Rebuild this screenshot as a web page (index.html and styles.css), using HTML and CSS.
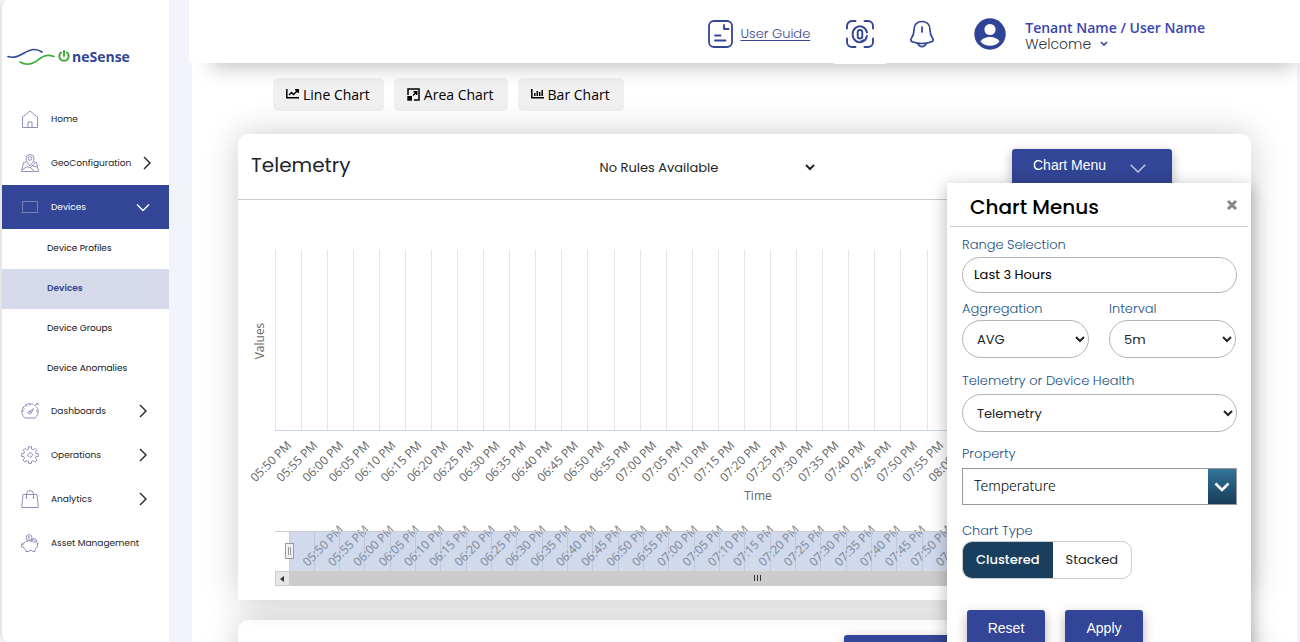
FILE: index.html
```html
<!DOCTYPE html>
<html lang="en">
<head>
<meta charset="utf-8">
<title>OneSense</title>
<link rel="stylesheet" href="styles.css">
</head>
<body>
<div class="app">
  <aside class="sidebar">
    <a class="logo" href="#">
      <svg class="logo-waves" width="48" height="18" viewBox="0 0 48 18" fill="none" stroke-linecap="round">
        <path d="M1 8.500C12 12 18 1.500 27 1.500C31 1.500 33.500 3 35 4" stroke="#324596" stroke-width="1.600"/>
        <path d="M13 14C17 16.500 22 17.500 28 14C35 9 38 5.500 47 8.500" stroke="#3dab3a" stroke-width="1.600"/>
      </svg>
      <svg class="logo-power" width="12" height="14" viewBox="0 0 12 14" fill="none" stroke="#3dab3a" stroke-width="2" stroke-linecap="round">
        <path d="M3 2.500A4.700 4.700 0 1 0 9 2.500M6 1V6"/>
      </svg>
      <span>neSense</span>
    </a>
    <nav>
      <a class="nav-item" href="#">
        <svg class="nav-icon" viewBox="0 0 18 18"><path d="M1 7.500L9 1L17 7.500M1.500 7V17.500H16.500V7M7 17.500V12H11V17.500"/></svg>
        <span>Home</span>
      </a>
      <a class="nav-item nav-item-wide" href="#">
        <svg class="nav-icon" viewBox="0 0 18 18"><path d="M9 12C6.500 9 5 7 5 4.500A4 4 0 0 1 13 4.500C13 7 11.500 9 9 12ZM5 8L2.500 8.500L.5 17.500H17.500L15.500 8.500L13 8M1 16L6 12.500L9 14L14 9M10 14L13 17M12 12L16.500 13"/><circle cx="9" cy="4.500" r="1.800"/></svg>
        <span>GeoConfiguration</span>
        <svg class="arrow" viewBox="0 0 14 14"><path d="M4 1L10 7L4 13"/></svg>
      </a>
      <a class="nav-item nav-item-open" href="#">
        <svg class="nav-icon" viewBox="0 0 18 18"><path d="M1.500 13.500V3.500H16.500V13.500M.5 14.500H17.500"/></svg>
        <span>Devices</span>
        <svg class="arrow" viewBox="0 0 14 14"><path d="M1 4.500L7 10.500L13 4.500"/></svg>
      </a>
      <a class="sub-item" href="#">Device Profiles</a>
      <a class="sub-item sub-item-active" href="#">Devices</a>
      <a class="sub-item" href="#">Device Groups</a>
      <a class="sub-item" href="#">Device Anomalies</a>
      <a class="nav-item" href="#">
        <svg class="nav-icon" viewBox="0 0 18 18"><path d="M4 16H14C18 12 18.500 7 14.500 4M4 16C0 13 0 7 3.500 4C6 1.500 10 1.200 12.500 2.500M.8 9H3M1.800 5.500L3.500 6.500M5 2.500L6 4.500M9 1.500V3.500M17 9H15M8 10L12.500 6.500L10 11.500M13 4L16 1.500M15 1.500H17V3.500"/><circle cx="8.500" cy="10.500" r="1.300"/></svg>
        <span>Dashboards</span>
        <svg class="arrow" viewBox="0 0 14 14"><path d="M4 1L10 7L4 13"/></svg>
      </a>
      <a class="nav-item" href="#">
        <svg class="nav-icon" viewBox="0 0 18 18"><path d="M7.500 .8H10.500V3L12.500 3.800L14 2.300L16 4.300L14.500 6L15.200 7.500H17.300V10.500H15.200L14.500 12L16 14L14 16L12.300 14.600L10.500 15.300V17.300H7.500V15.300L5.800 14.600L4 16L2 14L3.500 12.300L2.800 10.500H.7V7.500H2.800L3.500 5.800L2 4.300L4 2.300L5.600 3.800L7.500 3ZM7 8V11M7.500 7.500A2.200 2.200 0 1 1 8.500 11"/></svg>
        <span>Operations</span>
        <svg class="arrow" viewBox="0 0 14 14"><path d="M4 1L10 7L4 13"/></svg>
      </a>
      <a class="nav-item" href="#">
        <svg class="nav-icon" viewBox="0 0 18 18"><path d="M2 4.500H16L17.300 17.500H.7ZM5.500 8V4A3.500 3.500 0 0 1 12.500 4V8M4.500 8H6.500M11.500 8H13.500"/></svg>
        <span>Analytics</span>
        <svg class="arrow" viewBox="0 0 14 14"><path d="M4 1L10 7L4 13"/></svg>
      </a>
      <a class="nav-item" href="#">
        <svg class="nav-icon" viewBox="0 0 18 18"><path d="M4.500 7.500C3 8.500 2.700 9.500 2.300 10.500L.7 10V13H2.500C3 14.500 4 15.300 5 16V17.500H8L8.500 16.500H11L11.500 17.500H14V15.500C16.500 13.500 17 11.500 16.500 10M16 10L17.500 9M1 8.500L2.500 10M10 7L12 4.500L15 5.500L15.500 8L17 10M12 4.500L11.500 7L13.500 9M13 7L15.500 8M5 7.500C7 6.500 9 6.500 11 7.500"/><circle cx="8" cy="3.500" r="2.900"/><path d="M8 2V5M7 2.500H8"/></svg>
        <span>Asset Management</span>
      </a>
    </nav>
  </aside>

  <div class="page">
    <header class="topbar">
      <a class="guide" href="#">
        <svg width="26" height="28" viewBox="0 0 26 28" fill="none" stroke="currentColor" stroke-width="1.800" stroke-linecap="round" stroke-linejoin="round"><rect x="1" y="1" width="23" height="26" rx="5"/><path d="M16 5V9H20.500M7 15.500H12.500M7 20.500H17.500"/></svg>
        <span>User Guide</span>
      </a>
      <button class="icon-button scan" aria-label="Scan">
        <svg width="28" height="28" viewBox="0 0 28 28" fill="none" stroke="currentColor" stroke-width="1.900" stroke-linecap="round"><path d="M1 8.500V6A5 5 0 0 1 6 1H9.500M18.500 1H22A5 5 0 0 1 27 6V8.500M27 18.500V22A5 5 0 0 1 22 27H18.500M9.500 27H6A5 5 0 0 1 1 22V18.500M21 12.500A7.300 8 0 1 0 21 16M18 20A7 7 0 0 1 15 21.500"/><rect x="11.700" y="10" width="4.600" height="8.500" rx="2.300"/></svg>
      </button>
      <button class="icon-button bell" aria-label="Notifications">
        <svg width="26" height="28" viewBox="0 0 26 28" fill="none" stroke="currentColor" stroke-width="1.700" stroke-linecap="round" stroke-linejoin="round"><path d="M13 1.500C7.500 1.500 5 5.500 5 10C5 14 4 16 2.500 18C1 20 2 21.500 4 22C10 24 16 24 22 22C24 21.500 25 20 23.500 18C22 16 21 14 21 10C21 5.500 18.500 1.500 13 1.500ZM9 24C10.500 27.500 15.500 27.500 17 24M13 7V12"/></svg>
      </button>
      <svg class="avatar" width="32" height="32" viewBox="0 0 32 32"><circle cx="16" cy="16" r="15.700" fill="#2f4496"/><circle cx="16" cy="11.500" r="5.600" fill="#fff"/><path d="M6.500 23.500C8 20.500 12 19 16 19S24 20.500 25.500 23.500C23 26.500 20 27.800 16 27.800S9 26.500 6.500 23.500Z" fill="#fff"/></svg>
      <div class="user">
        <strong>Tenant Name / User Name</strong>
        <button class="welcome">Welcome
          <svg width="8" height="6" viewBox="0 0 8 6" fill="none" stroke="#324596" stroke-width="1.600"><path d="M1 1L4 4L7 1"/></svg>
        </button>
      </div>
    </header>

    <main class="content">
      <div class="chart-types">
        <button><svg width="13" height="13" viewBox="0 0 13 13" fill="none" stroke="currentColor" stroke-width="1.500"><path d="M.8 1V9.800H13M3 7L5.500 4.500L7.500 6.500L11.500 2.500M9 1.800H12.200V5"/></svg>Line Chart</button>
        <button><svg width="13" height="14" viewBox="0 0 13 14" fill="none" stroke="currentColor" stroke-width="1.500"><path d="M1 7V1H12V12H7M6 7.500L9.500 4M6.500 3.700H9.700V7"/><path d="M.3 8H5V12.700H.3Z" fill="currentColor" stroke="none"/></svg>Area Chart</button>
        <button><svg width="13" height="13" viewBox="0 0 13 13" fill="none" stroke="currentColor" stroke-width="1.500"><path d="M.8 1V9.800H13M3.800 8V5M6.300 8V3M8.700 8V4M11.200 8V2"/></svg>Bar Chart</button>
      </div>

      <section class="card telemetry">
        <div class="card-head">
          <h2>Telemetry</h2>
          <select class="rules" aria-label="Rules"><option>No Rules Available</option></select>
          <button class="primary menu-toggle">Chart Menu
            <svg width="16" height="9" viewBox="0 0 16 9" fill="none" stroke="#c5cbe4" stroke-width="1.400"><path d="M.7 .7L8 8L15.300 .7"/></svg>
          </button>
        </div>
        <div class="chart" id="chart"></div>

        <form class="menu">
          <div class="menu-head">
            <h3>Chart Menus</h3>
            <button type="button" class="close" aria-label="Close"><svg width="10" height="10" viewBox="0 0 10 10" stroke="#868686" stroke-width="3"><path d="M1 1L9 9M9 1L1 9"/></svg></button>
          </div>
          <div class="menu-body">
            <div class="field range-field">
              <label for="range">Range Selection</label>
              <input id="range" class="box range" type="text" value="Last 3 Hours">
            </div>
            <div class="pair">
              <div class="field">
                <label for="agg">Aggregation</label>
                <select id="agg" class="box"><option>AVG</option></select>
              </div>
              <div class="field">
                <label for="interval">Interval</label>
                <select id="interval" class="box"><option>5m</option></select>
              </div>
            </div>
            <div class="field source">
              <label for="source">Telemetry or Device Health</label>
              <select id="source" class="box"><option>Telemetry</option></select>
            </div>
            <div class="field property">
              <label for="property">Property</label>
              <div class="combo">
                <select id="property"><option>Temperature</option></select>
                <span class="combo-arrow"><svg width="16" height="10" viewBox="0 0 16 10" fill="none" stroke="#fff" stroke-width="2.600"><path d="M1.500 1.500L8 8L14.500 1.500"/></svg></span>
              </div>
            </div>
            <fieldset class="type">
              <legend>Chart Type</legend>
              <div class="segments">
                <label><input type="radio" name="type" checked><span>Clustered</span></label>
                <label><input type="radio" name="type"><span>Stacked</span></label>
              </div>
            </fieldset>
            <div class="actions">
              <button type="reset" class="primary">Reset</button>
              <button type="button" class="primary">Apply</button>
            </div>
          </div>
        </form>
      </section>

      <section class="card next-card">
        <button class="primary" aria-label="Open"></button>
      </section>
    </main>
  </div>
</div>
<script src="chart.js"></script>
</body>
</html>
```
FILE: styles.css
```css
* { box-sizing: border-box; }
body {
  margin: 0;
  background: #f3f4fb;
  font-family: Poppins, Inter, "Open Sans", sans-serif;
  font-size: 13px;
  color: #212529;
}
button, input, select { font: inherit; color: inherit; }
button { border: 0; background: none; padding: 0; cursor: pointer; }
h2, h3 { margin: 0; font-weight: 500; }
a { color: inherit; text-decoration: none; }

.app { display: flex; height: 100vh; overflow: hidden; }

.sidebar {
  flex: none;
  width: 169px;
  border-left: 2px solid #e6e6e6;
  border-radius: 8px 0 0 8px;
  background: #fff;
}
.logo {
  display: flex;
  align-items: center;
  height: 97px;
  padding: 16px 0 0 5px;
  color: #324596;
  font: 700 14px "Open Sans", "Noto Sans", sans-serif;
}
.logo-power { margin: 0 2px 0 3px; }
.nav-item {
  display: flex;
  align-items: center;
  height: 44px;
  padding: 0 19px;
  font-size: 9px;
}
.nav-item-wide { padding-right: 15px; }
.nav-icon {
  flex: none;
  width: 18px;
  height: 18px;
  margin-right: 12px;
  fill: none;
  stroke: #8284b4;
  stroke-width: 0.9;
}
.arrow {
  width: 14px;
  height: 14px;
  margin-left: auto;
  fill: none;
  stroke: #222;
  stroke-width: 1.4;
}
.nav-item-open { background: #324596; color: #fff; }
.nav-item-open .arrow { stroke: #fff; }
.sub-item {
  display: flex;
  align-items: center;
  height: 40px;
  padding: 0 0 2px 45px;
  font-size: 9px;
  color: #111;
}
.sub-item-active { background: #d6d9ea; color: #324596; font-weight: 600; }

.page { flex: 1; min-width: 0; display: flex; flex-direction: column; padding-left: 20px; }
.topbar {
  position: relative;
  z-index: 2;
  flex: none;
  display: flex;
  align-items: center;
  justify-content: flex-end;
  height: 63px;
  padding: 5px 95px 0 0;
  background: #fff;
  color: #324596;
  box-shadow: 8px 18px 20px -14px rgba(0, 0, 0, 0.25);
}
.guide { display: flex; align-items: center; gap: 6px; font-weight: 300; }
.guide span { text-decoration: underline; text-underline-offset: 2px; }
.icon-button { display: grid; place-items: center; color: inherit; }
.scan { width: 56px; height: 60px; margin-left: 22px; border-radius: 4px; background: #fff; }
.bell { margin-left: 21px; }
.avatar { margin-left: 39px; }
.user { display: flex; flex-direction: column; align-items: flex-start; margin-left: 19px; padding-top: 4px; }
.user strong { color: #3845b0; font: 600 14px/16px "Open Sans", "Noto Sans", sans-serif; }
.welcome { display: flex; align-items: center; gap: 9px; color: #333; font-size: 14px; font-weight: 300; line-height: 16px; }

.content {
  flex: 1;
  min-height: 0;
  margin: 0 3px;
  padding: 15px 46px 0;
  overflow: hidden;
  background: #fff;
}
.chart-types { display: flex; gap: 10px; padding-left: 35px; }
.chart-types button {
  display: flex;
  align-items: center;
  gap: 4px;
  height: 33px;
  padding: 0 14px 0 13px;
  border-radius: 5px;
  background: #f0f0f0;
  color: #000;
  font: 14px "Open Sans", "Noto Sans", sans-serif;
}

.card {
  border-radius: 10px 10px 0 0;
  background: #fff;
  box-shadow: 0 0 35px rgba(0, 0, 0, 0.2);
}
.telemetry { position: relative; margin-top: 23px; }
.card-head {
  display: grid;
  grid-template-columns: 35fr 222px 36fr;
  align-items: start;
  height: 66px;
  padding: 15px 79px 0 13px;
  border-bottom: 1px solid #ccc;
}
.card-head h2 { font-size: 20px; font-weight: 400; line-height: 32px; }
.rules { height: 36px; border: 0; background: #fff; }
.primary {
  border-radius: 3px;
  background: #324596;
  color: #fff;
  font: 14px "Liberation Sans", Arial, sans-serif;
  box-shadow: 0 4px 12px rgba(0, 0, 0, 0.3);
}
.menu-toggle {
  display: flex;
  align-items: center;
  justify-self: end;
  justify-content: space-between;
  width: 160px;
  height: 36px;
  padding: 0 26px 4px 21px;
}
.menu-toggle svg { margin-top: 6px; }
.chart { height: 400px; overflow: hidden; }
.chart svg { display: block; font: 12px "Open Sans", "Noto Sans", sans-serif; }

.menu {
  position: absolute;
  z-index: 1;
  top: 49px;
  right: 0;
  width: 304px;
  height: 520px;
  background: #fff;
  box-shadow: 0 4px 16px rgba(0, 0, 0, 0.3);
}
.menu-head {
  display: flex;
  align-items: center;
  justify-content: space-between;
  height: 44px;
  margin: 0 3px;
  padding: 4px 11px 0 20px;
  border-bottom: 1px solid #ccc;
}
.menu-head h3 { color: #000; font-size: 20px; }
.close { display: flex; padding-bottom: 4px; }
.menu-body { padding: 7px 14px 0 15px; }
.field { display: flex; flex-direction: column; }
.range-field { gap: 1px; }
.field label, legend { color: #205081; font-weight: 300; line-height: 22px; }
.box {
  width: 100%;
  height: 38px;
  padding: 0 0 0 10px;
  border: 1px solid #b5b5b5;
  border-radius: 19px;
  background: #fff;
}
.range { height: 36px; margin-bottom: 5px; padding-left: 11px; color: #000; }
.pair { display: grid; grid-template-columns: 127px 127px; gap: 20px; }
.source { margin-top: 12px; gap: 2px; }
.property { margin-top: 11px; gap: 3px; }
.combo { position: relative; }
.combo select {
  display: block;
  width: 100%;
  height: 37px;
  padding: 0 40px 2px 11px;
  border: 1px solid #999;
  border-radius: 0;
  background: #fff;
  appearance: none;
  color: #000;
  font: 300 14px "Noto Sans", sans-serif;
}
.combo-arrow {
  position: absolute;
  top: 1px;
  right: 1px;
  bottom: 1px;
  display: grid;
  place-items: center;
  width: 28px;
  background: linear-gradient(#327499, #183b58);
  pointer-events: none;
}
.type { margin: 15px 0 0; padding: 0; border: 0; }
legend { padding: 0; line-height: 21px; }
.segments {
  display: inline-flex;
  height: 38px;
  overflow: hidden;
  border: 1px solid #ccc;
  border-radius: 10px;
}
.segments label { position: relative; display: flex; }
.segments input { position: absolute; opacity: 0; }
.segments span { display: flex; align-items: center; padding: 0 13px; }
.segments input:checked + span { background: #183f5e; color: #fff; font-weight: 500; }
.actions { display: flex; gap: 20px; margin: 31px 0 0 5px; }
.actions button { width: 78px; height: 36px; }

.next-card { display: flex; justify-content: flex-end; height: 200px; margin-top: 20px; padding: 15px 247px 0 0; }
.next-card button { width: 160px; height: 36px; }
```
FILE: chart.js
```js
const host = document.getElementById('chart');
const COUNT = 37;
const LEFT = 37;
const NAV_TOP = 331;

function timeLabel(i) {
  const minutes = 5 * 60 + 50 + i * 5;
  const pad = n => String(n).padStart(2, '0');
  return pad(Math.floor(minutes / 60)) + ':' + pad(minutes % 60) + ' PM';
}

function draw() {
  const width = host.clientWidth;
  const right = width - 11;
  const step = (right - LEFT) / COUNT;
  const navLeft = LEFT + 14;
  const navRight = right - 14;
  const navStep = (navRight - navLeft) / COUNT;
  const middle = Math.round((LEFT + right) / 2);
  let out = '';

  for (let i = 0; i <= COUNT; i++) {
    const x = Math.floor(LEFT + i * step) + 0.5;
    out += `<path d="M${x} 50V230" stroke="#e6e6e6"/>`;
  }
  out += `<path d="M${LEFT} 230.5H${right}" stroke="#ccd6eb"/>`;

  for (let i = 0; i < COUNT; i++) {
    const x = LEFT + (i + 0.5) * step + 4;
    out += `<text transform="translate(${x} 246) rotate(-45)" text-anchor="end" fill="#666">${timeLabel(i)}</text>`;
  }
  out += `<text x="${middle}" y="300" text-anchor="middle" fill="#666">Time</text>`;
  out += `<text transform="translate(26 141) rotate(-90)" text-anchor="middle" fill="#666">Values</text>`;

  for (let i = 0; i < COUNT; i++) {
    const x = navLeft + (i + 0.5) * navStep + 6;
    const grid = Math.floor(navLeft + (i + 1) * navStep) + 0.5;
    out += `<path d="M${grid} ${NAV_TOP}V371" stroke="#e6e6e6"/>`;
    if (x + 44 < width) {
      out += `<text transform="translate(${x} 367) rotate(-45)" fill="#888">${timeLabel(i)}</text>`;
    }
  }
  out += `<rect x="${navLeft}" y="${NAV_TOP}" width="${navRight - navLeft}" height="40" fill="#6685c2" fill-opacity="0.3"/>`;
  out += `<path d="M${LEFT} ${NAV_TOP + 0.5}H${right}" stroke="#ccc"/>`;
  out += `<path d="M${navLeft + 0.5} ${NAV_TOP}V371" stroke="#ccc"/>`;

  out += `<rect x="${LEFT}" y="371" width="${right - LEFT}" height="15" fill="#ccc"/>`;
  out += `<rect x="${LEFT + 0.5}" y="371.5" width="14" height="14" fill="#e6e6e6" stroke="#ccc"/>`;
  out += `<path d="M${LEFT + 9} 376V382L${LEFT + 5} 379Z" fill="#333"/>`;
  out += `<path d="M${middle - 3.5} 375V381M${middle - 0.5} 375V381M${middle + 2.5} 375V381" stroke="#333"/>`;
  out += `<rect x="${navLeft - 3.5}" y="343.500" width="8" height="15" fill="#f2f2f2" stroke="#999"/>`;
  out += `<path d="M${navLeft - 0.5} 347V355M${navLeft + 1.5} 347V355" stroke="#999"/>`;

  host.innerHTML = `<svg width="${width}" height="400">${out}</svg>`;
}

draw();
window.addEventListener('resize', draw);
```
